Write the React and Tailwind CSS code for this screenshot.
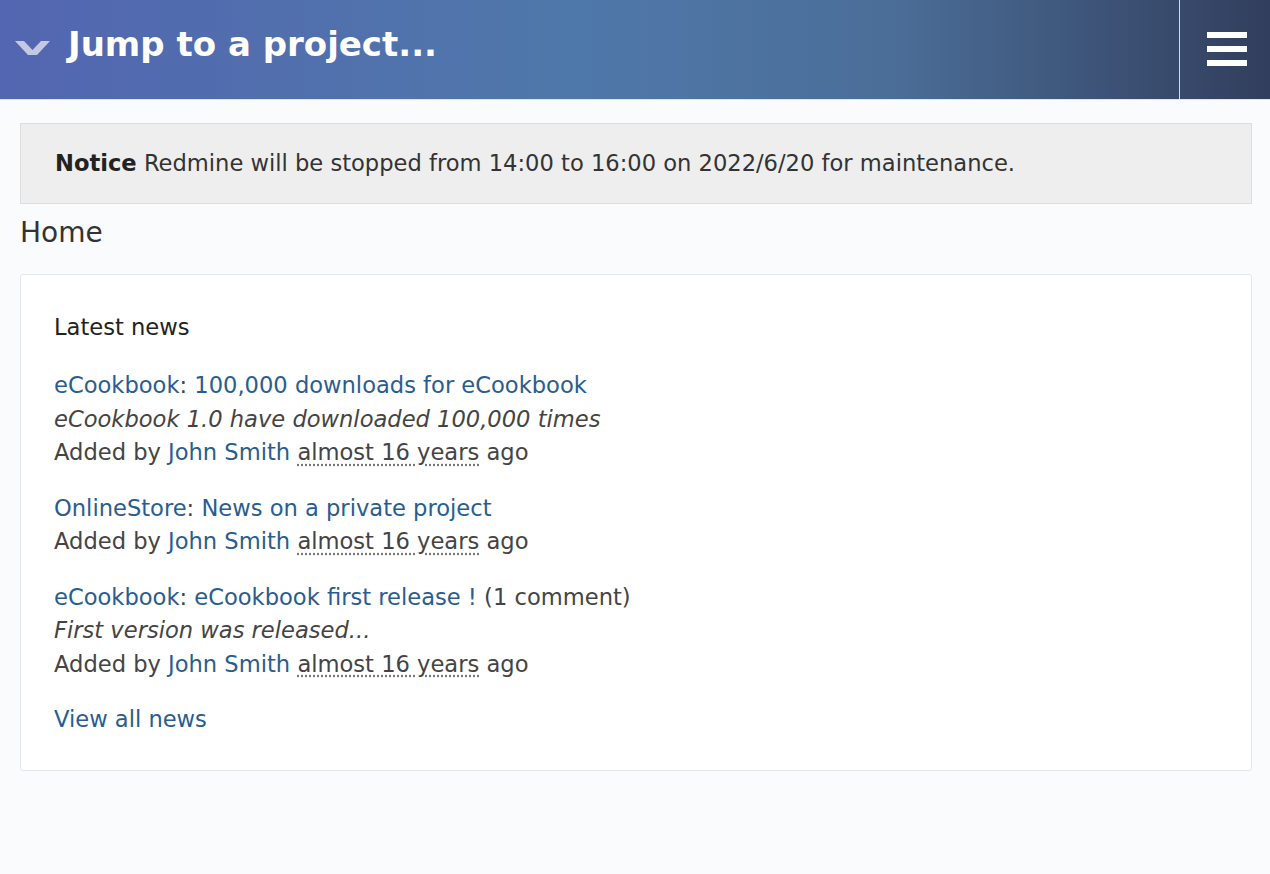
import React from 'react';

const news = [
  {
    project: 'eCookbook',
    title: '100,000 downloads for eCookbook',
    summary: 'eCookbook 1.0 have downloaded 100,000 times',
  },
  { project: 'OnlineStore', title: 'News on a private project' },
  {
    project: 'eCookbook',
    title: 'eCookbook first release !',
    comments: '(1 comment)',
    summary: 'First version was released...',
  },
];

function Header() {
  return (
    <div className="flex h-[100px] items-stretch bg-[linear-gradient(to_right,#5366b1_0%,#4f78aa_45%,#4b6e98_70%,#323e5d_100%)] border-b border-[#dfe3ea]">
      <div className="flex flex-1 items-center pl-[15px] pb-[10px]">
        <svg width="35" height="20" viewBox="0 0 35 20" className="mr-[18px] mt-[6px]">
          <polygon points="0,3 9,3 17.5,12 26,3 35,3 22,17 13,17" fill="#c3c9e2" />
        </svg>
        <span className="text-[34px] font-bold text-white">Jump to a project...</span>
      </div>
      <div className="flex w-[91px] items-center justify-center border-l border-[#d5d9e0]">
        <div className="flex flex-col gap-[8px] pl-[3px] pb-[2px]">
          <div className="h-[6px] w-[40px] bg-white" />
          <div className="h-[6px] w-[40px] bg-white" />
          <div className="h-[6px] w-[40px] bg-white" />
        </div>
      </div>
    </div>
  );
}

export default function App() {
  return (
    <div
      className="min-h-[874px] bg-[#fafbfc] text-[#444]"
      style={{ fontFamily: '"DejaVu Sans", Verdana, sans-serif' }}
    >
      <Header />
      <div className="pl-[20px] pr-[18px] pt-[23px]">
        <div className="flex h-[81px] items-center border border-[#dddddd] bg-[#eeeeee] pl-[34px] text-[22.6px] text-[#333]">
          <span className="font-bold text-[#222]">Notice</span>&nbsp;Redmine will be stopped from 14:00 to 16:00 on 2022/6/20 for maintenance.
        </div>
        <h2 className="mt-[9px] text-[28px] leading-[40px] text-[#333]">Home</h2>
        <div className="mt-[21px] rounded-[3px] border border-[#e3e6ec] bg-white px-[33px] pt-[35px] pb-[33px]">
          <h3 className="text-[22.6px] leading-[34px] text-[#222]">Latest news</h3>
          <div className="mt-[25px] flex flex-col gap-[22px]">
            {news.map((n, i) => (
              <div key={i} className="text-[22.6px] leading-[33.5px]">
                <div>
                  <a className="text-[#2a5d8f]">{n.project}</a>:{' '}
                  <a className="text-[#2a5d8f]">{n.title}</a>
                  {n.comments && <span> {n.comments}</span>}
                </div>
                {n.summary && <div className="italic">{n.summary}</div>}
                <div>
                  Added by <a className="text-[#2a5d8f]">John Smith</a>{' '}
                  <span className="underline decoration-dotted decoration-[#777] underline-offset-[4px]">almost 16 years</span> ago
                </div>
              </div>
            ))}
          </div>
          <a className="mt-[22px] block text-[22.6px] leading-[33.5px] text-[#2a5d8f]">View all news</a>
        </div>
      </div>
    </div>
  );
}
